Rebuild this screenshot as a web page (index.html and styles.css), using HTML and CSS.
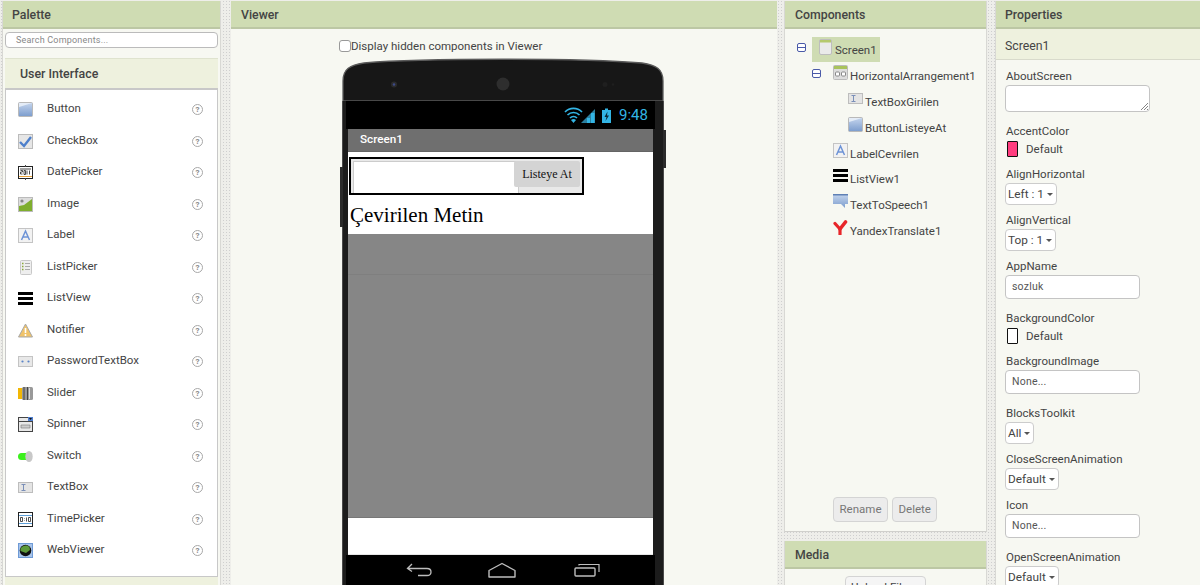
FILE: index.html
```html
<!DOCTYPE html>
<html lang="en">
<head>
<meta charset="utf-8">
<title>Designer</title>
<link rel="stylesheet" href="styles.css">
</head>
<body>
<svg class="defs" width="0" height="0">
  <defs>
    <linearGradient id="blue" x1="0" y1="0" x2="0" y2="1"><stop offset="0" stop-color="#c6d6ee"/><stop offset="1" stop-color="#7b9ccd"/></linearGradient>
    <symbol id="i-button" viewBox="0 0 15 15"><rect x=".5" y=".5" width="14" height="14" rx="1" fill="url(#blue)" stroke="#b9b9b9"/><path d="M1 1h13L1 5z" fill="#e4ecf7"/></symbol>
    <symbol id="i-check" viewBox="0 0 15 15"><rect x=".5" y=".5" width="14" height="14" fill="#e6e6e6" stroke="#bbb"/><path d="M2 8l4 4 7-9" fill="none" stroke="#4d7fcb" stroke-width="2.4"/></symbol>
    <symbol id="i-date" viewBox="0 0 15 15"><rect x=".5" y="1.5" width="14" height="12" fill="#fff" stroke="#222"/><path d="M1 11.5h13" stroke="#e8a33a"/><path d="M2 4h11M7.5 0v2M7.5 13v2" stroke="#444"/><path d="M2.5 5.500h2v1.500h-2v2h2M6 5.500h1.500v4H6zM9 5.500v4M11.500 5.500v4" fill="none" stroke="#222" stroke-width=".8"/></symbol>
    <symbol id="i-image" viewBox="0 0 15 15"><rect x=".5" y=".5" width="14" height="14" fill="#ddd" stroke="#bbb"/><path d="M1 14V9l5-1 8-6v12z" fill="#7fae2e"/><circle cx="4" cy="4" r="1.600" fill="#888"/></symbol>
    <symbol id="i-label" viewBox="0 0 15 15"><rect x=".5" y=".5" width="14" height="14" fill="#f2f2f2" stroke="#c4c4c4"/><path d="M3.500 12L7.500 3l4 9M5 9h5" fill="none" stroke="#6d93d6" stroke-width="1.500"/></symbol>
    <symbol id="i-listpicker" viewBox="0 0 15 15"><rect x="2.500" y=".5" width="11" height="14" rx="1" fill="#eee" stroke="#c8c8c8"/><path d="M4 3.500h1.500M4 6.500h1.500M4 9.500h1.500" stroke="#8aa83a" stroke-width="1.300"/><path d="M7 3.500h5M7 6.500h5M7 9.500h5" stroke="#aaa"/></symbol>
    <symbol id="i-listview" viewBox="0 0 15 15"><path d="M0 1h15v3H0zM0 6h15v3H0zM0 11h15v3H0z" fill="#000"/></symbol>
    <symbol id="i-notifier" viewBox="0 0 15 15"><path d="M7.500 1L.5 14h14z" fill="#f0c36a" stroke="#a8a8a8"/><path d="M7.500 5v5M7.500 11v2" stroke="#fff" stroke-width="1.600"/></symbol>
    <symbol id="i-password" viewBox="0 0 15 15"><rect x=".5" y="2.500" width="14" height="10" fill="#e8e8e8" stroke="#c4c4c4"/><circle cx="4.500" cy="7.500" r="1.100" fill="#5a84c8"/><circle cx="10.500" cy="7.500" r="1.100" fill="#5a84c8"/></symbol>
    <symbol id="i-slider" viewBox="0 0 15 15"><rect y="2" width="6" height="11" fill="#f2b705"/><rect x="4" y="1" width="11" height="13" rx="1.500" fill="#999"/><path d="M6 1v13M9.500 1v13" stroke="#444"/><path d="M11.500 2v11" stroke="#ddd"/></symbol>
    <symbol id="i-spinner" viewBox="0 0 15 15"><rect x=".5" y=".5" width="14" height="14" fill="#e8e8e8" stroke="#444"/><path d="M.5 4.500h14" stroke="#444"/><rect x="10" y="0" width="5" height="4" fill="#4f7fd0"/><path d="M11 1h3l-1.500 2z" fill="#111"/><path d="M3 8h9v3H3z" fill="#ccc" stroke="#777" stroke-width=".6"/></symbol>
    <symbol id="i-switch" viewBox="0 0 15 15"><rect x="0" y="4" width="12" height="7" rx="3.500" fill="#3bf01c"/><ellipse cx="11" cy="7.500" rx="3.700" ry="5.500" fill="#c8c8c8"/></symbol>
    <symbol id="i-textbox" viewBox="0 0 15 15"><rect x=".5" y="2.500" width="14" height="10" fill="#e4e4e4" stroke="#bdbdbd"/><path d="M3.500 4.500h4M3.500 10.500h4M5.500 4.500v6" stroke="#7a8fb8"/></symbol>
    <symbol id="i-time" viewBox="0 0 15 15"><rect x=".5" y=".5" width="14" height="14" fill="#fff" stroke="#222"/><path d="M1 3.500h13M1 11.500h13" stroke="#5e9fd8"/><path d="M2.500 5.500h2v4h-2zM6.500 6v.5M6.500 8.500v.5M8.500 5.500v4M10.500 5.500h2v4h-2z" fill="none" stroke="#222" stroke-width=".8"/></symbol>
    <symbol id="i-web" viewBox="0 0 15 15"><rect x=".5" y=".5" width="14" height="14" fill="#a8c4ea" stroke="#6e9ad6"/><circle cx="7.500" cy="7.500" r="5.800" fill="#111"/><path d="M2.500 5.500c2-3.500 7-4 9-1.500l.5 3-4 3-5.500-2z" fill="#5c9a3a"/></symbol>
    <symbol id="i-screen" viewBox="0 0 13 16"><rect x=".5" y=".5" width="12" height="15" rx="1.500" fill="#eaeaea" stroke="#bdbdbd"/><path d="M1 1h11v2.500H1z" fill="#b5c96d"/></symbol>
    <symbol id="i-harr" viewBox="0 0 15 15"><rect x=".5" y=".5" width="14" height="14" rx="1" fill="#ddd" stroke="#bbb"/><path d="M1 1h13v3H1z" fill="#a9c35c"/><rect x="2.500" y="7" width="4" height="4" rx="1" fill="#fff" stroke="#888"/><rect x="8.500" y="7" width="4" height="4" rx="1" fill="#fff" stroke="#888"/></symbol>
    <symbol id="i-tts" viewBox="0 0 15 15"><path d="M0 0h15v10h-3l0 4-4-4H0z" fill="url(#blue)"/><path d="M0 0h15v1.500H0z" fill="#5f80b5"/></symbol>
    <symbol id="i-yandex" viewBox="0 0 15 15"><path d="M2 3.500l5 5.500v5.500" fill="none" stroke="#e8262a" stroke-width="3.200" stroke-linecap="round"/><path d="M7 9L12.500 2" fill="none" stroke="#e8262a" stroke-width="3.600" stroke-linecap="round"/></symbol>
  </defs>
</svg>
<div class="page">
  <section class="panel palette">
    <h2 class="panel-head">Palette</h2>
    <div class="search">Search Components...</div>
    <h3 class="drawer-head">User Interface</h3>
    <ul class="palette-list">
      <li class="palette-item"><svg class="ico"><use href="#i-button"/></svg><span class="palette-name">Button</span><span class="help">?</span></li>
      <li class="palette-item"><svg class="ico"><use href="#i-check"/></svg><span class="palette-name">CheckBox</span><span class="help">?</span></li>
      <li class="palette-item"><svg class="ico"><use href="#i-date"/></svg><span class="palette-name">DatePicker</span><span class="help">?</span></li>
      <li class="palette-item"><svg class="ico"><use href="#i-image"/></svg><span class="palette-name">Image</span><span class="help">?</span></li>
      <li class="palette-item"><svg class="ico"><use href="#i-label"/></svg><span class="palette-name">Label</span><span class="help">?</span></li>
      <li class="palette-item"><svg class="ico"><use href="#i-listpicker"/></svg><span class="palette-name">ListPicker</span><span class="help">?</span></li>
      <li class="palette-item"><svg class="ico"><use href="#i-listview"/></svg><span class="palette-name">ListView</span><span class="help">?</span></li>
      <li class="palette-item"><svg class="ico"><use href="#i-notifier"/></svg><span class="palette-name">Notifier</span><span class="help">?</span></li>
      <li class="palette-item"><svg class="ico"><use href="#i-password"/></svg><span class="palette-name">PasswordTextBox</span><span class="help">?</span></li>
      <li class="palette-item"><svg class="ico"><use href="#i-slider"/></svg><span class="palette-name">Slider</span><span class="help">?</span></li>
      <li class="palette-item"><svg class="ico"><use href="#i-spinner"/></svg><span class="palette-name">Spinner</span><span class="help">?</span></li>
      <li class="palette-item"><svg class="ico"><use href="#i-switch"/></svg><span class="palette-name">Switch</span><span class="help">?</span></li>
      <li class="palette-item"><svg class="ico"><use href="#i-textbox"/></svg><span class="palette-name">TextBox</span><span class="help">?</span></li>
      <li class="palette-item"><svg class="ico"><use href="#i-time"/></svg><span class="palette-name">TimePicker</span><span class="help">?</span></li>
      <li class="palette-item"><svg class="ico"><use href="#i-web"/></svg><span class="palette-name">WebViewer</span><span class="help">?</span></li>
    </ul>
  </section>

  <section class="panel viewer">
    <h2 class="panel-head">Viewer</h2>
    <label class="hidden-toggle"><span class="fake-check"></span>Display hidden components in Viewer</label>
    <div class="phone">
      <span class="side-btn side-right"></span>
      <span class="side-btn side-left"></span>
      <div class="phone-head">
        <svg class="phone-shell" viewBox="0 0 322 44" preserveAspectRatio="none">
          <path d="M1 44V24C1 12 8 8 22 6C80 1 242 1 300 6C314 8 321 12 321 24V44Z" fill="#171717" stroke="#5a5a5a" stroke-width="1.300"/>
          <circle cx="52" cy="27.500" r="3" fill="#2c2c2c"/><circle cx="52" cy="27.500" r="1.200" fill="#3c4a88"/>
          <circle cx="161" cy="27" r="6.500" fill="#2e2e2e"/>
          <circle cx="263" cy="27.500" r="2.500" fill="#1f1f1f"/><circle cx="271" cy="27.500" r="1.300" fill="#1f1f1f"/>
        </svg>
      </div>
      <div class="phone-body">
        <div class="status-bar">
          <svg class="status-icons" viewBox="0 0 50 17" width="50" height="17">
            <path d="M1 5a12 12 0 0 1 17 0M3.500 8a8.500 8.500 0 0 1 12 0M6 11a5 5 0 0 1 7 0" fill="none" stroke="#33b5e5" stroke-width="1.700"/>
            <path d="M9.500 16l-2.500-3a4 4 0 0 1 5 0z" fill="#33b5e5"/>
            <path d="M17 16L31 2v14z" fill="#2b7f9f"/><path d="M23 16v-5h3v5zM27 16V6h3.500v10z" fill="#33b5e5"/>
            <path d="M38 3h9v13h-9zM41 1.500h3V3h-3z" fill="#33b5e5"/><path d="M43.500 4.500l-3 5.500h2l-1 4 3.500-5.500h-2z" fill="#0a2a38"/>
          </svg>
          <span class="clock">9:48</span>
        </div>
        <div class="title-bar">Screen1</div>
        <div class="form">
          <div class="harr">
            <div class="fake-textbox"></div>
            <div class="fake-button">Listeye At</div>
          </div>
          <div class="big-label">Çevirilen Metin</div>
        </div>
        <div class="list-area"><div class="list-row"></div></div>
        <div class="form-bottom"></div>
        <div class="nav-bar">
          <svg class="nav-icon" width="26" height="14" viewBox="0 0 26 14"><path d="M6 1L1.500 5.500 6 8.500M2 5.500h19c3 0 4 1.500 4 3.500s-1 3.500-4 3.500H12" fill="none" stroke="#bdbdbd" stroke-width="1.300"/></svg>
          <svg class="nav-icon" width="28" height="16" viewBox="0 0 28 16"><path d="M1 15V8.500L14 1.500 27 8.500V15z" fill="none" stroke="#bdbdbd" stroke-width="1.400" stroke-linejoin="round"/></svg>
          <svg class="nav-icon nav-recents" width="26" height="14" viewBox="0 0 26 14"><rect x="1" y="5" width="20" height="8" rx="1" fill="none" stroke="#bdbdbd" stroke-width="1.400"/><path d="M5 2.500V1.500h20V9" fill="none" stroke="#bdbdbd" stroke-width="1.200"/></svg>
        </div>
      </div>
    </div>
  </section>

  <div class="middle-col">
    <section class="panel components">
      <h2 class="panel-head">Components</h2>
      <ul class="tree">
        <li class="tree-row depth-0"><span class="toggle"></span><span class="tree-selected"><svg class="ico-screen"><use href="#i-screen"/></svg><span class="tree-text">Screen1</span></span></li>
        <li class="tree-row depth-1"><span class="toggle"></span><svg class="ico tree-ico"><use href="#i-harr"/></svg><span class="tree-text">HorizontalArrangement1</span></li>
        <li class="tree-row depth-2"><svg class="ico tree-ico"><use href="#i-textbox"/></svg><span class="tree-text">TextBoxGirilen</span></li>
        <li class="tree-row depth-2"><svg class="ico tree-ico"><use href="#i-button"/></svg><span class="tree-text">ButtonListeyeAt</span></li>
        <li class="tree-row depth-3"><svg class="ico tree-ico"><use href="#i-label"/></svg><span class="tree-text">LabelCevrilen</span></li>
        <li class="tree-row depth-3"><svg class="ico tree-ico"><use href="#i-listview"/></svg><span class="tree-text">ListView1</span></li>
        <li class="tree-row depth-3"><svg class="ico tree-ico"><use href="#i-tts"/></svg><span class="tree-text">TextToSpeech1</span></li>
        <li class="tree-row depth-3"><svg class="ico tree-ico"><use href="#i-yandex"/></svg><span class="tree-text">YandexTranslate1</span></li>
      </ul>
      <div class="tree-actions">
        <button class="btn">Rename</button>
        <button class="btn">Delete</button>
      </div>
    </section>
    <section class="panel media">
      <h2 class="panel-head">Media</h2>
      <div class="media-body"><button class="btn upload">Upload File ...</button></div>
    </section>
  </div>

  <section class="panel properties">
    <h2 class="panel-head">Properties</h2>
    <div class="prop-sub">Screen1</div>
    <div class="prop-list">
      <div class="prop prop-about"><div class="prop-label">AboutScreen</div><div class="textarea"><svg width="8" height="8" viewBox="0 0 8 8" class="grip"><path d="M1 8l7-7M4 8l4-4M7 8l1-1" stroke="#666" stroke-width=".8"/></svg></div></div>
      <div class="prop prop-color"><div class="prop-label">AccentColor</div><div class="color-row"><span class="swatch swatch-accent"></span>Default</div></div>
      <div class="prop prop-select"><div class="prop-label">AlignHorizontal</div><div class="select">Left : 1<span class="caret"></span></div></div>
      <div class="prop prop-select"><div class="prop-label">AlignVertical</div><div class="select">Top : 1<span class="caret"></span></div></div>
      <div class="prop prop-input"><div class="prop-label">AppName</div><div class="input">sozluk</div></div>
      <div class="prop prop-color"><div class="prop-label">BackgroundColor</div><div class="color-row"><span class="swatch"></span>Default</div></div>
      <div class="prop prop-input"><div class="prop-label">BackgroundImage</div><div class="input">None...</div></div>
      <div class="prop prop-select"><div class="prop-label">BlocksToolkit</div><div class="select">All<span class="caret"></span></div></div>
      <div class="prop prop-select"><div class="prop-label">CloseScreenAnimation</div><div class="select">Default<span class="caret"></span></div></div>
      <div class="prop prop-input"><div class="prop-label">Icon</div><div class="input">None...</div></div>
      <div class="prop prop-select"><div class="prop-label">OpenScreenAnimation</div><div class="select">Default<span class="caret"></span></div></div>
    </div>
  </section>
</div>
</body>
</html>
```

FILE: styles.css
```css
* { box-sizing: border-box; }
html, body { margin: 0; padding: 0; height: 585px; overflow: hidden; }
body {
  font-family: Roboto, "Liberation Sans", sans-serif;
  font-size: 11.500px;
  color: #444;
  background-color: #eeeeea;
  background-image: radial-gradient(#cfcfcf 0.7px, transparent 0.8px);
  background-size: 3px 3px;
}
.defs { position: absolute; }
ul { list-style: none; margin: 0; padding: 0; }
h2, h3 { margin: 0; }
.page { display: flex; height: 585px; padding: 1px 0 0 2px; }
.panel { background: #f7f8f2; overflow: hidden; }
.panel-head {
  height: 28px;
  align-self: stretch;
  padding: 7px 0 0 10px;
  font-size: 12.300px;
  line-height: 15px;
  font-weight: 500;
  color: #444;
  background: #cfdcb3;
  border-bottom: 2px solid #bcc7a4;
  flex: none;
}
.palette { width: 219px; margin-right: 10px; display: flex; flex-direction: column; border-right: 1px solid #d8d8d4; border-left: 1px solid #d8d8d4; }
.palette .panel-head { padding-left: 9px; }
.search {
  margin: 3px 2px 0 2px;
  height: 16px;
  padding-left: 10px;
  font-size: 9px;
  letter-spacing: .2px;
  line-height: 14px;
  color: #888;
  background: #fff;
  border: 1px solid #bbb;
  border-radius: 4px;
}
.drawer-head {
  margin: 10px 2px 0 2px;
  height: 30px;
  padding: 7px 0 0 15px;
  font-size: 12.400px;
  line-height: 15px;
  font-weight: 500;
  color: #444;
  background: #eef1de;
  border-top: 1px solid #dfe3cf;
}
.palette-list {
  margin: 0 2px;
  height: 489px;
  padding: 4px 0 0 12px;
  background: #fff;
  border: 1px solid #c8c8c8;
  border-top-width: 2px;
  display: grid;
  grid-auto-rows: 31.500px;
  box-shadow: 0 8px 0 #eef1de;
}
.palette-item { display: flex; align-items: center; }
.ico { width: 15px; height: 15px; flex: none; }
.palette-name { margin-left: 14px; flex: 1; line-height: 14px; margin-top: -3px; }
.help {
  width: 11px; height: 11px; margin-right: 14px;
  border: 1px solid #a8a8a8; border-radius: 50%;
  font-size: 8px; line-height: 9px; font-weight: 700; text-align: center; color: #888;
}
.viewer { width: 546px; margin-right: 7px; display: flex; flex-direction: column; align-items: flex-start; }
.hidden-toggle { display: flex; align-items: center; height: 12px; margin: 11px 0 0 108px; line-height: 12px; color: #444; }
.fake-check { width: 12px; height: 12px; background: #fff; border: 1px solid #999; border-radius: 3px; }
.phone { position: relative; width: 322px; margin: 5px 0 0 111px; flex: none; }
.phone-head { height: 44px; }
.phone-shell { display: block; width: 322px; height: 44px; }
.side-btn { position: absolute; width: 3px; background: #2b2b2b; }
.side-right { right: -2px; top: 73px; height: 38px; }
.side-left { left: -2px; top: 110px; height: 60px; }
.phone-body {
  height: 484px;
  padding: 0 10px 0 5px;
  background: #1c1c1c;
  border-left: 1px solid #4a4a4a;
  border-right: 1px solid #4a4a4a;
}
.status-bar {
  height: 28px;
  margin: 0 -2px;
  padding: 0 7px 0 0;
  background: #000;
  display: flex;
  align-items: center;
  justify-content: flex-end;
}
.status-icons { margin-right: 5px; }
.clock { font-size: 15px; color: #33b5e5; width: 29px; }
.title-bar {
  height: 23px;
  padding: 3px 0 0 12px;
  font-size: 11.700px;
  line-height: 15px;
  font-weight: 500;
  color: #fff;
  background: #6f6f6f;
  border-bottom: 1px solid #646464;
}
.form { height: 82px; background: #fff; padding-top: 5px; }
.harr {
  display: flex;
  align-items: flex-start;
  width: 235px;
  height: 38px;
  margin-left: 1px;
  padding: 2px 0 0 2px;
  border: 2px solid #000;
  background: #e9e9e9;
}
.fake-textbox { width: 166px; height: 32px; background: #fff; border: 1px solid #ccc; border-bottom: 0; flex: none; }
.fake-button {
  width: 66px; height: 26px; margin-left: -5px;
  font-family: "Liberation Serif", serif; font-size: 12px; line-height: 26px; text-align: center;
  color: #111; background: #d4d4d4; border-radius: 2px; position: relative;
}
.big-label { font-family: "Liberation Serif", serif; font-size: 21px; line-height: 24px; color: #000; margin: 8px 0 0 2px; }
.list-area { height: 284px; background: #868686; padding-top: 40px; border-bottom: 1px solid #777; }
.list-row { height: 1px; background: #7f7f7f; }
.form-bottom { height: 37px; background: #fff; border-bottom: 1px solid #e6e6e6; }
.nav-bar {
  height: 30px;
  margin: 0 -2px;
  background: #000;
  display: flex;
  align-items: center;
  padding: 0 0 0 60px;
  gap: 56px;
}
.nav-recents { margin-left: 2px; }
.middle-col { width: 203px; margin-right: 8px; display: flex; flex-direction: column; }
.components { height: 531px; flex: none; position: relative; display: flex; flex-direction: column; border-bottom: 1px solid #d0d0cc; border-left: 1px solid #d8d8d4; border-right: 1px solid #d8d8d4; }
.tree { padding-top: 6px; flex: 1; }
.tree-row { display: flex; align-items: center; height: 25.800px; position: relative; }
.tree-text { line-height: 14px; margin-top: 5px; }
.tree-ico { margin: -2px 2px 0 0; }
.toggle { width: 9px; height: 9px; border: 1px solid #4a5aa8; border-radius: 2px; background: linear-gradient(#fff 40%, #4a5aa8 40%, #4a5aa8 60%, #fff 60%); flex: none; }
.depth-0 { padding-left: 12px; }
.depth-0 .toggle { margin-right: 6px; }
.depth-1 { padding-left: 27px; }
.depth-1 .toggle { margin-right: 12px; }
.depth-2 { padding-left: 63px; }
.depth-3 { padding-left: 48px; }
.tree-selected { display: flex; align-items: center; width: 68px; height: 25px; padding-left: 7px; background: #cfdcb3; margin-top: 3px; }
.ico-screen { width: 13px; height: 16px; margin: -4px 3px 0 0; flex: none; }
.tree-selected .tree-text { margin-top: 1px; }
.tree-actions { display: flex; justify-content: flex-start; gap: 4px; padding: 0 0 9px 48px; }
.btn {
  height: 25px;
  padding: 0 5.500px 2px;
  font-family: Roboto, "Liberation Sans", sans-serif;
  font-size: 11.500px;
  color: #777;
  background: #ececec;
  border: 1px solid #d4d4d4;
  border-radius: 4px;
}
.media { margin-top: 9px; flex: 1; border-left: 1px solid #d8d8d4; border-right: 1px solid #d8d8d4; }
.media-body { padding: 7px 0 0 60px; }
.upload { display: block; width: 81px; height: 22px; color: #444; background: #f5f5f5; white-space: nowrap; padding: 0; }
.properties { width: 205px; border-left: 1px solid #d8d8d4; }
.properties .panel-head { padding-left: 9px; }
.prop-sub {
  height: 31px;
  padding: 9px 0 0 9px;
  font-size: 12.300px;
  line-height: 16px;
  background: #eef1de;
  border-bottom: 1px solid #d8dacb;
}
.prop-list { padding: 9px 0 0 9px; }
.prop-label { line-height: 14px; padding-left: 1px; }
.prop-about { height: 55px; }
.textarea { position: relative; width: 145px; height: 27px; margin-top: 2px; background: #fff; border: 1px solid #c4c4c4; border-radius: 4px; }
.grip { position: absolute; right: 1px; bottom: 1px; }
.prop-color { height: 43px; }
.prop-select { height: 46px; }
.prop-input { height: 52px; }
.color-row { display: flex; align-items: center; margin-top: 3px; line-height: 16px; padding-left: 2px; }
.swatch { width: 11px; height: 16px; margin-right: 8px; background: #fff; border: 1.500px solid #111; border-radius: 1px; }
.swatch-accent { background: #ff3d7f; }
.select {
  display: inline-flex; align-items: center;
  height: 22px; margin-top: 2px; padding: 0 3px 0 2px;
  font-size: 11.800px; color: #444;
  background: #fff; border: 1px solid #ccc; border-radius: 4px;
}
.caret { width: 0; height: 0; margin-left: 3px; border: 3px solid transparent; border-top: 3.500px solid #555; border-bottom: 0; }
.input {
  width: 135px; height: 24px; margin-top: 2px; padding-left: 6px;
  font-size: 10.500px; line-height: 22px; letter-spacing: .2px; color: #555;
  background: #fff; border: 1px solid #c4c4c4; border-radius: 4px;
}
```
